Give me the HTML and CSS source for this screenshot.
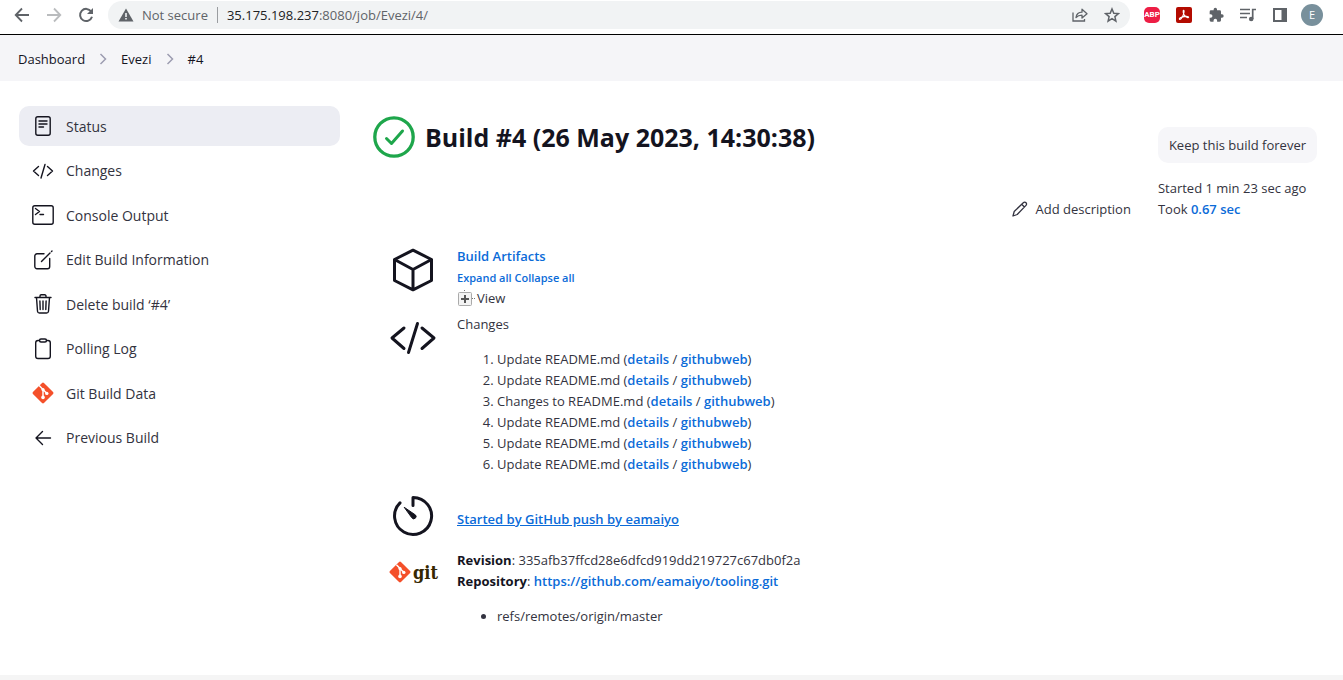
FILE: index.html
```html
<!DOCTYPE html>
<html lang="en">
<head>
<meta charset="utf-8">
<title>Evezi #4 [Jenkins]</title>
<link rel="stylesheet" href="styles.css">
</head>
<body>
<svg class="defs" width="0" height="0" aria-hidden="true">
  <defs>
    <g id="git-mark">
      <rect x="4.2" y="4.2" width="15.6" height="15.6" rx="1.4" fill="#f4502a" transform="rotate(45 12 12)"/>
      <path d="M8.4 4.8l3.6 3.6v8.200M12 8.600l3.700 3.700" fill="none" stroke="#fff" stroke-width="1.400"/>
      <circle cx="12" cy="8.600" r="1.600" fill="#fff"/>
      <circle cx="12" cy="16.400" r="1.800" fill="#fff"/>
      <circle cx="15.800" cy="12.400" r="1.700" fill="#fff"/>
    </g>
  </defs>
</svg>

<header class="browser">
  <nav class="browser-nav" aria-label="Browser">
    <button type="button" aria-label="Back"><svg width="16" height="16" viewBox="0 0 16 16" fill="none" stroke="#5f6368" stroke-width="1.800"><path d="M15 8H2M8 1.500L1.700 8 8 14.500"/></svg></button>
    <button type="button" aria-label="Forward"><svg width="16" height="16" viewBox="0 0 16 16" fill="none" stroke="#babcbe" stroke-width="1.800"><path d="M1 8h13M8 1.500L14.300 8 8 14.500"/></svg></button>
    <button type="button" aria-label="Reload"><svg width="16" height="16" viewBox="0 0 16 16"><path d="M13.200 4.500A6.100 6.100 0 1 0 14 9.800" fill="none" stroke="#5f6368" stroke-width="2"/><path d="M15 1v6H9z" fill="#5f6368"/></svg></button>
  </nav>
  <div class="address">
    <svg width="16" height="14" viewBox="0 0 16 14"><path d="M8 0.500L15.500 13.500H.5z" fill="#5f6368"/><path d="M7.200 5h1.600v4H7.200zM7.200 10h1.600v1.600H7.200z" fill="#f1f3f4"/></svg>
    <span class="insecure">Not secure</span>
    <span class="url"><b>35.175.198.237</b>:8080/job/Evezi/4/</span>
    <button type="button" aria-label="Share"><svg width="16" height="16" viewBox="0 0 16 16" fill="none" stroke="#5f6368" stroke-width="1.300"><path d="M1 5.500V14h11.500v-2"/><path d="M4 10.500C4.500 7 6.500 5.300 10 5.200V2.200L15 6.700l-5 4.300V8.200C7.500 8.200 5.600 8.800 4 10.500z" stroke-linejoin="round"/></svg></button>
    <button type="button" aria-label="Bookmark"><svg width="16" height="16" viewBox="0 0 16 16" fill="none" stroke="#5f6368" stroke-width="1.500"><path d="M8 2l1.800 4.200 4.600.4-3.500 3 1 4.500L8 11.700l-3.900 2.400 1-4.500-3.500-3 4.600-.4z"/></svg></button>
  </div>
  <div class="extensions">
    <button type="button" aria-label="AdBlock" class="abp">ABP</button>
    <button type="button" aria-label="Acrobat"><svg width="16" height="16" viewBox="0 0 16 16"><rect width="16" height="16" rx="2" fill="#b30b00"/><path d="M3.500 12.300c-.8-.8 1.500-2.200 4.500-2.700s4.800-.1 4.700.6c-.2.900-2.400.2-4-1.500S6.800 3.500 7.500 3.300c1-.2.600 2.800-.5 5.200s-2.600 4.400-3.500 3.800z" fill="none" stroke="#fff" stroke-width="1.100"/></svg></button>
    <button type="button" aria-label="Extensions"><svg width="16" height="16" viewBox="0 0 24 24" fill="#5f6368"><path d="M21 11h-1.500V7a2 2 0 0 0-2-2h-4V3.500a2.500 2.500 0 0 0-5 0V5h-4a2 2 0 0 0-2 2v3.800H4a2.700 2.700 0 0 1 0 5.400H2.500V20a2 2 0 0 0 2 2h3.800v-1.500a2.700 2.700 0 0 1 5.400 0V22h3.800a2 2 0 0 0 2-2v-4H21a2.500 2.500 0 0 0 0-5z"/></svg></button>
    <button type="button" aria-label="Media"><svg width="16" height="16" viewBox="0 0 16 16"><path d="M0 2.500h10M0 6.500h10M0 10.500h7" stroke="#5f6368" stroke-width="1.700"/><path d="M12.700 12V2.500H16" fill="none" stroke="#5f6368" stroke-width="1.700"/><circle cx="11.200" cy="12" r="2.300" fill="#5f6368"/></svg></button>
    <button type="button" aria-label="Side panel"><svg width="16" height="16" viewBox="0 0 16 16"><path d="M1 1h14v14H1zM3 3v10h6.500V3z" fill="#5f6368" fill-rule="evenodd"/></svg></button>
    <button type="button" aria-label="Profile" class="avatar">E</button>
  </div>
</header>

<nav class="breadcrumbs" aria-label="Breadcrumb">
  <a href="#">Dashboard</a>
  <svg width="8" height="12" viewBox="0 0 8 12"><path d="M1.500 1l5 5-5 5"/></svg>
  <a href="#">Evezi</a>
  <svg width="8" height="12" viewBox="0 0 8 12"><path d="M1.500 1l5 5-5 5"/></svg>
  <a href="#">#4</a>
</nav>

<div class="page">
  <nav class="tasks" aria-label="Build">
    <a class="task active" href="#"><svg viewBox="0 0 24 24"><rect x="4.800" y="2.800" width="14.400" height="18.400" rx="2"/><path d="M8 7h8M8 10h8M8 13h4.500"/></svg>Status</a>
    <a class="task" href="#"><svg viewBox="0 0 24 24"><path d="M7.500 7.500L2.500 12l5 4.500M16.500 7.500l5 4.500-5 4.500M14 5.500l-4 13.500"/></svg>Changes</a>
    <a class="task" href="#"><svg viewBox="0 0 24 24"><rect x="1.800" y="2.800" width="20.400" height="18.400" rx="2"/><path d="M4.500 5.500l4 3-4 3M9 11.500h3.500"/></svg>Console Output</a>
    <a class="task" href="#"><svg viewBox="0 0 24 24"><path d="M13 5.800H6a2.200 2.200 0 0 0-2.200 2.200v10.500a2.200 2.200 0 0 0 2.200 2.200h10.500a2.200 2.200 0 0 0 2.200-2.200V10.500M10.500 13.500L19 5M20.500 3.500l.5-.5"/></svg>Edit Build Information</a>
    <a class="task" href="#"><svg viewBox="0 0 24 24"><path d="M4 5.500h16M5.500 5.500l1 13.700a2 2 0 0 0 2 1.800h7a2 2 0 0 0 2-1.800l1-13.700M9 5.500V4a1.200 1.200 0 0 1 1.200-1.200h3.600A1.200 1.200 0 0 1 15 4v1.500M12 9v8.500M8.900 9l.3 8.500M15.100 9l-.3 8.500"/></svg>Delete build ‘#4’</a>
    <a class="task" href="#"><svg viewBox="0 0 24 24"><path d="M8.500 3.500H7A2.300 2.300 0 0 0 4.700 5.800v13.400A2.300 2.300 0 0 0 7 21.500h10a2.300 2.300 0 0 0 2.300-2.300V5.800A2.300 2.300 0 0 0 17 3.500h-1.500"/><rect x="8.500" y="2" width="7" height="3" rx="1.500"/></svg>Polling Log</a>
    <a class="task" href="#"><svg viewBox="0 0 24 24" class="git"><use href="#git-mark"/></svg>Git Build Data</a>
    <a class="task" href="#"><svg viewBox="0 0 24 24"><path d="M11.500 5.500L5 12l6.500 6.500M5 12h14.500"/></svg>Previous Build</a>
  </nav>

  <main class="content">
    <div class="build-head">
      <h1><svg width="42" height="42" viewBox="0 0 42 42" fill="none" stroke="#1ea64b"><circle cx="21" cy="21" r="19.200" stroke-width="3.300"/><path d="M13.500 22.500l5 5L29.500 15" stroke-width="3" stroke-linecap="round" stroke-linejoin="round"/></svg>Build #4 (26 May 2023, 14:30:38)</h1>
      <button type="button" class="add"><svg width="18" height="18" viewBox="0 0 18 18" fill="none" stroke="#333340" stroke-width="1.300" stroke-linejoin="round"><path d="M2 15l1.200-4.500L12.300 1.700a1.900 1.900 0 0 1 2.700 0 1.900 1.900 0 0 1 0 2.700L6.200 13.500zM10.700 3.300l2.700 2.700"/></svg>Add description</button>
      <div class="facts">
        <button type="button" class="keep">Keep this build forever</button>
        <div>Started 1 min 23 sec ago</div>
        <div>Took <a href="#">0.67 sec</a></div>
      </div>
    </div>

    <div class="summary">
      <section class="row">
        <svg class="icon" viewBox="0 0 48 48"><path d="M24 4.200L42.500 13.500v21L24 43.800 5.500 34.500v-21zM5.500 13.500L24 23.500l18.500-10M24 23.500v20.300"/></svg>
        <div>
          <div><a href="#">Build Artifacts</a></div>
          <div class="tree-tools"><a href="#">Expand all</a> <a href="#">Collapse all</a></div>
          <div class="tree"><svg width="18" height="18" viewBox="0 0 18 18"><path d="M7.500 0v3M15 8.500h3" stroke="#777" stroke-dasharray="1 1"/><rect x="1.500" y="2.500" width="13" height="13" rx="1" fill="#f3f3f3" stroke="#aaa"/><path d="M4 9h8M8 5v8" stroke="#555" stroke-width="2"/></svg>View</div>
        </div>
      </section>
      <section class="row changes">
        <svg class="icon" viewBox="0 0 48 48"><path d="M15 14L3 24l12 10.500M33 14l12 10-12 10.500M28.500 9.500l-9 29"/></svg>
        <div>
          <div>Changes</div>
          <ol>
            <li>Update README.md (<a href="#">details</a> / <a href="#">githubweb</a>)</li>
            <li>Update README.md (<a href="#">details</a> / <a href="#">githubweb</a>)</li>
            <li>Changes to README.md (<a href="#">details</a> / <a href="#">githubweb</a>)</li>
            <li>Update README.md (<a href="#">details</a> / <a href="#">githubweb</a>)</li>
            <li>Update README.md (<a href="#">details</a> / <a href="#">githubweb</a>)</li>
            <li>Update README.md (<a href="#">details</a> / <a href="#">githubweb</a>)</li>
          </ol>
        </div>
      </section>
      <section class="row cause">
        <svg class="icon" viewBox="0 0 48 48"><path d="M24 13.500V5.500a18.500 18.500 0 1 1-13 5.400"/><path d="M15.500 15.500l11 7.500a2.200 2.200 0 1 1-3.500 3z" fill="#14141f" stroke-width="1"/></svg>
        <div><a class="underlined" href="#">Started by GitHub push by eamaiyo</a></div>
      </section>
      <section class="row revision">
        <div class="git-logo"><svg width="22" height="22" viewBox="1 1 22 22"><use href="#git-mark"/></svg><span>git</span></div>
        <div>
          <div><b>Revision</b>: 335afb37ffcd28e6dfcd919dd219727c67db0f2a</div>
          <div><b>Repository</b>: <a href="#">https://github.com/eamaiyo/tooling.git</a></div>
          <ul><li>refs/remotes/origin/master</li></ul>
        </div>
      </section>
    </div>
  </main>
</div>
<footer class="footer"></footer>
</body>
</html>
```
FILE: styles.css
```css
* { box-sizing: border-box; }

body {
  margin: 0;
  min-height: 100vh;
  display: flex;
  flex-direction: column;
  background: #fff;
  color: #14141f;
  font-family: "Open Sans", "Noto Sans", sans-serif;
  font-size: 13px;
  line-height: 21px;
}

.defs { position: absolute; }

a { color: #0b6bd8; font-weight: 600; text-decoration: none; }
button { border: 0; padding: 0; background: none; color: inherit; font: inherit; }
svg { flex: none; }

.browser {
  display: flex;
  align-items: center;
  height: 35px;
  padding: 0 20px 4px 14px;
  border-bottom: 1px solid #000;
}
.browser svg { display: block; }
.browser-nav { display: flex; gap: 16px; margin-right: 14px; }
.address {
  flex: 1;
  display: flex;
  align-items: center;
  height: 28px;
  padding: 0 10px;
  border-radius: 14px;
  background: #f1f3f4;
  color: #5f6368;
}
.address button + button { margin-left: 16px; }
.insecure { margin: 0 9px 0 8px; line-height: 16px; padding-right: 9px; border-right: 1px solid #9a9da0; }
.url { flex: 1; }
.url b { font-weight: 400; color: #202124; }
.extensions { display: flex; align-items: center; gap: 16px; margin-left: 14px; }
.abp {
  width: 16px;
  height: 16px;
  border-radius: 5px;
  background: #ed1e45;
  color: #fff;
  font-family: Roboto, sans-serif;
  font-size: 8px;
  font-weight: 700;
  line-height: 16px;
}
.avatar {
  width: 22px;
  height: 22px;
  margin-left: -3px;
  border-radius: 50%;
  background: #78909c;
  color: #fff;
  font-size: 11px;
  line-height: 22px;
}

.breadcrumbs {
  display: flex;
  align-items: center;
  gap: 14px;
  height: 46px;
  padding: 2px 18px 0;
  background: #f5f5f8;
}
.breadcrumbs a { color: #14141f; font-weight: 500; }
.breadcrumbs svg { fill: none; stroke: #9d9db0; stroke-width: 1.5; }

.page { flex: 1; display: flex; gap: 33px; padding: 25px 26px 24px 19px; }

.tasks {
  flex: 0 0 321px;
  display: flex;
  flex-direction: column;
  justify-content: space-between;
  align-self: flex-start;
  height: 352px;
}
.task {
  display: flex;
  align-items: center;
  gap: 11px;
  height: 40px;
  padding: 0 12px;
  border-radius: 10px;
  color: #333340;
  font-size: 14px;
  font-weight: 500;
}
.task svg {
  width: 24px;
  height: 24px;
  fill: none;
  stroke: #14141f;
  stroke-width: 1.4;
  stroke-linecap: round;
  stroke-linejoin: round;
}
.task .git { stroke: none; }
.active { background: #ecedf3; }

.content { flex: 1; color: #333340; }
.build-head { display: flex; align-items: flex-start; padding-top: 10px; }
h1 {
  flex: 1;
  display: flex;
  align-items: center;
  gap: 10px;
  margin: 0;
  color: #14141f;
  font-size: 25px;
  font-weight: 700;
  line-height: 42px;
}
.add {
  display: flex;
  align-items: center;
  align-self: flex-end;
  gap: 6px;
  margin-right: 27px;
  font-weight: 500;
}
.facts { padding-top: 11px; }
.keep {
  height: 36px;
  margin-bottom: 15px;
  padding: 0 11px;
  border-radius: 10px;
  background: #f6f6f9;
  font-weight: 500;
}

.summary { padding: 26px 0 0 16px; }
.row { display: flex; gap: 20px; }
.icon {
  width: 48px;
  height: 48px;
  fill: none;
  stroke: #14141f;
  stroke-width: 3;
  stroke-linecap: round;
  stroke-linejoin: round;
}
.tree-tools { font-size: 11px; }
.tree { display: flex; align-items: center; gap: 2px; }
.changes { margin-top: 5px; }
ol, ul { margin: 14px 0; padding-left: 40px; }
.cause { align-items: flex-end; margin-top: 3px; padding-bottom: 10px; }
.cause div { padding-bottom: 10px; }
.underlined { text-decoration: underline; }
.revision b { color: #14141f; font-weight: 700; }
.git-logo { display: flex; align-items: center; gap: 2px; width: 48px; height: 44px; }
.git-logo span {
  color: #362701;
  font-family: "DejaVu Serif Condensed", "DejaVu Serif", serif;
  font-size: 18px;
  font-weight: 700;
}

.footer { height: 5px; background: #f5f5f5; }
```
